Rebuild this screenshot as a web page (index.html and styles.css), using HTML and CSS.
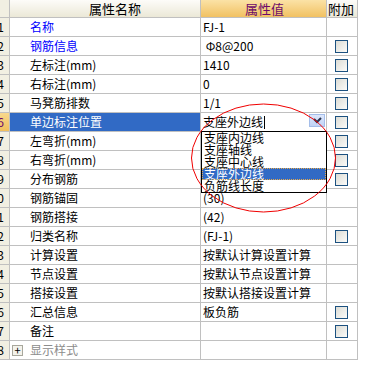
FILE: index.html
```html
<!DOCTYPE html>
<html lang="zh-CN">
<head>
    <meta charset="UTF-8">
    <title>属性编辑</title>
    <link rel="stylesheet" href="styles.css">
</head>
<body>
    <div class="sheet">
        <div class="grid">
            <div class="hd num"></div>
            <div class="hd name">属性名称</div>
            <div class="hd val">属性值</div>
            <div class="hd add">附加</div>

            <div class="num">1</div><div class="name blue">名称</div><div class="val">FJ-1</div><div class="add"></div>
            <div class="num">2</div><div class="name blue">钢筋信息</div><div class="val">&nbsp;Φ8@200</div><div class="add"><span class="cb"></span></div>
            <div class="num">3</div><div class="name">左标注(mm)</div><div class="val">1410</div><div class="add"><span class="cb"></span></div>
            <div class="num">4</div><div class="name">右标注(mm)</div><div class="val">0</div><div class="add"><span class="cb"></span></div>
            <div class="num">5</div><div class="name">马凳筋排数</div><div class="val">1/1</div><div class="add"><span class="cb"></span></div>
            <div class="num sel">6</div><div class="name sel">单边标注位置</div>
            <div class="val edit">支座外边线<span class="caret"></span>
                <span class="drop-btn">
                    <svg width="9" height="7" viewBox="0 0 9 7"><path d="M1 2 L4 5 L8 1" fill="none" stroke="#2b3550" stroke-width="2"/></svg>
                </span>
            </div>
            <div class="add"><span class="cb"></span></div>
            <div class="num">7</div><div class="name">左弯折(mm)</div><div class="val">0</div><div class="add"><span class="cb"></span></div>
            <div class="num">8</div><div class="name">右弯折(mm)</div><div class="val">0</div><div class="add"><span class="cb"></span></div>
            <div class="num">9</div><div class="name">分布钢筋</div><div class="val">Φ8@200</div><div class="add"><span class="cb"></span></div>
            <div class="num">10</div><div class="name">钢筋锚固</div><div class="val">(30)</div><div class="add"></div>
            <div class="num">11</div><div class="name">钢筋搭接</div><div class="val">(42)</div><div class="add"></div>
            <div class="num">12</div><div class="name">归类名称</div><div class="val">(FJ-1)</div><div class="add"><span class="cb"></span></div>
            <div class="num">13</div><div class="name">计算设置</div><div class="val">按默认计算设置计算</div><div class="add"></div>
            <div class="num">14</div><div class="name">节点设置</div><div class="val">按默认节点设置计算</div><div class="add"></div>
            <div class="num">15</div><div class="name">搭接设置</div><div class="val">按默认搭接设置计算</div><div class="add"></div>
            <div class="num">16</div><div class="name">汇总信息</div><div class="val">板负筋</div><div class="add"><span class="cb"></span></div>
            <div class="num">17</div><div class="name">备注</div><div class="val"></div><div class="add"><span class="cb"></span></div>
            <div class="num">18</div><div class="name group"><span class="plus">+</span>显示样式</div><div class="val"></div><div class="add"></div>
        </div>

        <ul class="dropdown">
            <li>支座内边线</li>
            <li>支座轴线</li>
            <li>支座中心线</li>
            <li class="on">支座外边线</li>
            <li>负筋线长度</li>
        </ul>

        <svg class="mark" width="377" height="366">
            <ellipse cx="263.5" cy="158" rx="72" ry="54" fill="none" stroke="#f00000" stroke-width="1"/>
        </svg>
    </div>
</body>
</html>
```

FILE: styles.css
```css
body {
    margin: 0;
    background: #fff;
    font-family: "Noto Sans CJK SC", "DejaVu Sans", sans-serif;
    font-size: 12px;
    color: #000;
}
.sheet {
    position: relative;
    width: 377px;
    height: 366px;
    overflow: hidden;
}
.grid {
    display: grid;
    grid-template-columns: 22px 191px 126px 31px;
    grid-template-rows: 18px;
    grid-auto-rows: 19px;
    margin-left: -12px;
    width: 370px;
}
.grid > div {
    box-sizing: border-box;
    border-right: 1px solid #c0c0c0;
    border-bottom: 1px solid #c0c0c0;
    display: flex;
    align-items: center;
    white-space: nowrap;
    overflow: hidden;
    line-height: 1;
}
.hd {
    justify-content: center;
    font-size: 13px;
    background: linear-gradient(#fdfcf9, #ebe8d7);
}
.hd.val {
    background: linear-gradient(#fbe2a6, #f1c162);
    color: #6c0a6a;
}
.hd.add {
    padding-right: 2px;
}
.num {
    justify-content: flex-end;
    padding-right: 5px;
    background: #f1efe2;
}
.num.sel {
    background: linear-gradient(#f8d88e, #f0bf5c);
    color: #6c0a6a;
}
.name {
    padding-left: 20px;
}
.name.blue {
    color: #0000ff;
}
.name.sel {
    background: #316ac5;
    color: #fff;
}
.name.group {
    padding-left: 2px;
    color: #8c8c8c;
}
.plus {
    box-sizing: border-box;
    width: 11px;
    height: 11px;
    margin-right: 7px;
    border: 1px solid #a8a79c;
    background: #f4f3ec;
    color: #000;
    font-size: 11px;
    line-height: 9px;
    text-align: center;
}
.val {
    padding-left: 2px;
}
.val.edit {
    position: relative;
}
.caret {
    display: inline-block;
    width: 1px;
    height: 13px;
    margin-left: 1px;
    background: #000;
}
.drop-btn {
    position: absolute;
    left: 108px;
    top: 1px;
    box-sizing: border-box;
    width: 16px;
    height: 13px;
    border: 1px solid #a4bde9;
    background: linear-gradient(#dde7fb, #c1d3f6);
    display: flex;
    align-items: center;
    justify-content: center;
}
.add {
    justify-content: center;
    padding-right: 1px;
}
.cb {
    box-sizing: border-box;
    width: 13px;
    height: 13px;
    border: 1px solid #1c5180;
    background: linear-gradient(135deg, #dcdcd5, #fbfbf9);
}
.dropdown {
    position: absolute;
    left: 201px;
    top: 131px;
    width: 124px;
    margin: 0;
    padding: 0;
    list-style: none;
    border: 1px solid #000;
    background: #fff;
    font-size: 12px;
}
.dropdown li {
    height: 12px;
    line-height: 12px;
    padding-left: 2px;
}
.dropdown li.on {
    background: #316ac5;
    color: #fff;
    outline: 1px dotted #e5a84a;
    outline-offset: -1px;
}
.mark {
    position: absolute;
    left: 0;
    top: 0;
    pointer-events: none;
}
```
